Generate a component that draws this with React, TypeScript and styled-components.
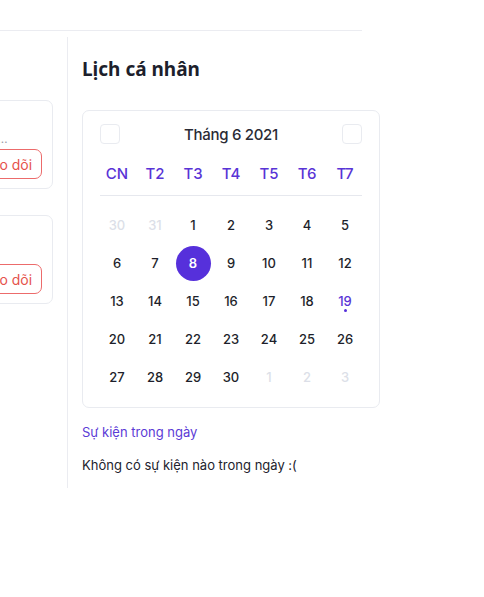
import React from "react";
import styled, { createGlobalStyle } from "styled-components";

const Global = createGlobalStyle`
  html, body { margin: 0; padding: 0; background: #fff; }
  body { overflow: hidden; font-family: Inter, "Noto Sans", sans-serif; color: #1e1f2b; }
  * { box-sizing: border-box; }
`;

const Page = styled.div`
  width: 484px;
  height: 597px;
  overflow: hidden;
`;

const TopRule = styled.div`
  width: 362px;
  height: 31px;
  border-bottom: 1px solid #ebecf1;
`;

const Columns = styled.div`
  display: flex;
  margin-top: 6px;
  margin-left: -200px;
`;

const LeftCol = styled.div`
  width: 268px;
  padding-right: 14px;
  border-right: 1px solid #ebecf1;
  height: 451px;
  padding-top: 63px;
  display: flex;
  flex-direction: column;
  gap: 26px;
`;

const UserCard = styled.div`
  height: 89px;
  border: 1px solid #e9ebf0;
  border-radius: 7px;
  padding: 0 10px 9px 14px;
  display: flex;
  flex-direction: column;
  justify-content: flex-end;
`;

const Sub = styled.div<{ $color: string; $width: number }>`
  font-size: 12px;
  color: ${(p) => p.$color};
  white-space: nowrap;
  overflow: hidden;
  text-overflow: ellipsis;
  width: ${(p) => p.$width}px;
  margin-bottom: 3px;
  line-height: 14px;
`;

const Row = styled.div`
  display: flex;
  justify-content: flex-end;
`;

const FollowBtn = styled.button`
  height: 30px;
  width: 78px;
  border: 1px solid #ec6b6b;
  border-radius: 7px;
  background: #fff;
  color: #e5524b;
  font-family: Inter, sans-serif;
  font-size: 14px;
  display: flex;
  align-items: center;
  justify-content: center;
  padding: 0;
`;

const RightCol = styled.div`
  padding-left: 14px;
  width: 330px;
`;

const Title = styled.h2`
  margin: 19px 0 0;
  font-family: "Noto Sans", "Open Sans", sans-serif;
  font-size: 19px;
  font-weight: 700;
  line-height: 26px;
  color: #1d1f2c;
`;

const CalCard = styled.div`
  margin-top: 28px;
  width: 298px;
  border: 1px solid #e9ebf0;
  border-radius: 7px;
  padding: 12px 15px 11px;
`;

const Header = styled.div`
  display: flex;
  align-items: center;
  justify-content: space-between;
  padding: 0 2px;
  height: 22px;
`;

const NavBox = styled.button`
  width: 20px;
  height: 20px;
  border: 1px solid #e9ebf0;
  border-radius: 4px;
  background: #fff;
  padding: 0;
`;

const Month = styled.div`
  font-size: 15px;
  font-weight: 500;
  color: #2a2b35;
  letter-spacing: -0.3px;
`;

const Grid = styled.div`
  display: grid;
  grid-template-columns: repeat(7, 38px);
`;

const WeekRow = styled(Grid)`
  margin-top: 10px;
`;

const WeekDay = styled.div`
  height: 36px;
  display: flex;
  align-items: center;
  justify-content: center;
  color: #5934d6;
  font-size: 15px;
  font-weight: 500;
`;

const Divider = styled.div`
  margin: 4px 2px 10px;
  border-top: 1px solid #e6e8ee;
`;

const DayCell = styled.div<{ $faded?: boolean; $selected?: boolean; $event?: boolean }>`
  position: relative;
  height: 38px;
  display: flex;
  align-items: center;
  justify-content: center;
  font-size: 13px;
  font-weight: 500;
  color: ${(p) => (p.$faded ? "#dcdfe8" : p.$selected ? "#fff" : p.$event ? "#5934d6" : "#1e1f2b")};
`;

const Circle = styled.span`
  width: 35px;
  height: 35px;
  border-radius: 50%;
  background: #5630db;
  display: flex;
  align-items: center;
  justify-content: center;
  font-weight: 600;
`;

const Dot = styled.span`
  position: absolute;
  left: 50%;
  top: 27px;
  width: 3px;
  height: 3px;
  margin-left: -1.5px;
  border-radius: 50%;
  background: #5630db;
`;

const EventLabel = styled.div`
  margin-top: 15px;
  font-size: 13px;
  line-height: 18px;
  color: #5b3bd6;
`;

const EmptyText = styled.div`
  margin-top: 15px;
  font-size: 13px;
  line-height: 18px;
  color: #22232d;
`;

type Day = { d: number; faded?: boolean };

const days: Day[] = [
  { d: 30, faded: true },
  { d: 31, faded: true },
  ...Array.from({ length: 30 }, (_, i) => ({ d: i + 1 })),
  { d: 1, faded: true },
  { d: 2, faded: true },
  { d: 3, faded: true },
];

const weekdays = ["CN", "T2", "T3", "T4", "T5", "T6", "T7"];

export default function App() {
  return (
    <Page>
      <Global />
      <TopRule />
      <Columns>
        <LeftCol>
          <UserCard>
            <Sub $color="#9a9ca8" $width={199}>Người dùng đang được theo dõi bởi nhiều người khác nữa</Sub>
            <Row>
              <FollowBtn>Theo dõi</FollowBtn>
            </Row>
          </UserCard>
          <UserCard>
            <Sub $color="#4a6fd6" $width={187}>Thành viên mới tham gia cộng đồng.</Sub>
            <Row>
              <FollowBtn>Theo dõi</FollowBtn>
            </Row>
          </UserCard>
        </LeftCol>
        <RightCol>
          <Title>Lịch cá nhân</Title>
          <CalCard>
            <Header>
              <NavBox aria-label="prev" />
              <Month>Tháng 6 2021</Month>
              <NavBox aria-label="next" />
            </Header>
            <WeekRow>
              {weekdays.map((w) => (
                <WeekDay key={w}>{w}</WeekDay>
              ))}
            </WeekRow>
            <Divider />
            <Grid>
              {days.map((day, i) => {
                const selected = !day.faded && day.d === 8;
                const event = !day.faded && day.d === 19;
                return (
                  <DayCell key={i} $faded={day.faded} $selected={selected} $event={event}>
                    {selected ? <Circle>{day.d}</Circle> : day.d}
                    {event && <Dot />}
                  </DayCell>
                );
              })}
            </Grid>
          </CalCard>
          <EventLabel>Sự kiện trong ngày</EventLabel>
          <EmptyText>Không có sự kiện nào trong ngày :(</EmptyText>
        </RightCol>
      </Columns>
    </Page>
  );
}
